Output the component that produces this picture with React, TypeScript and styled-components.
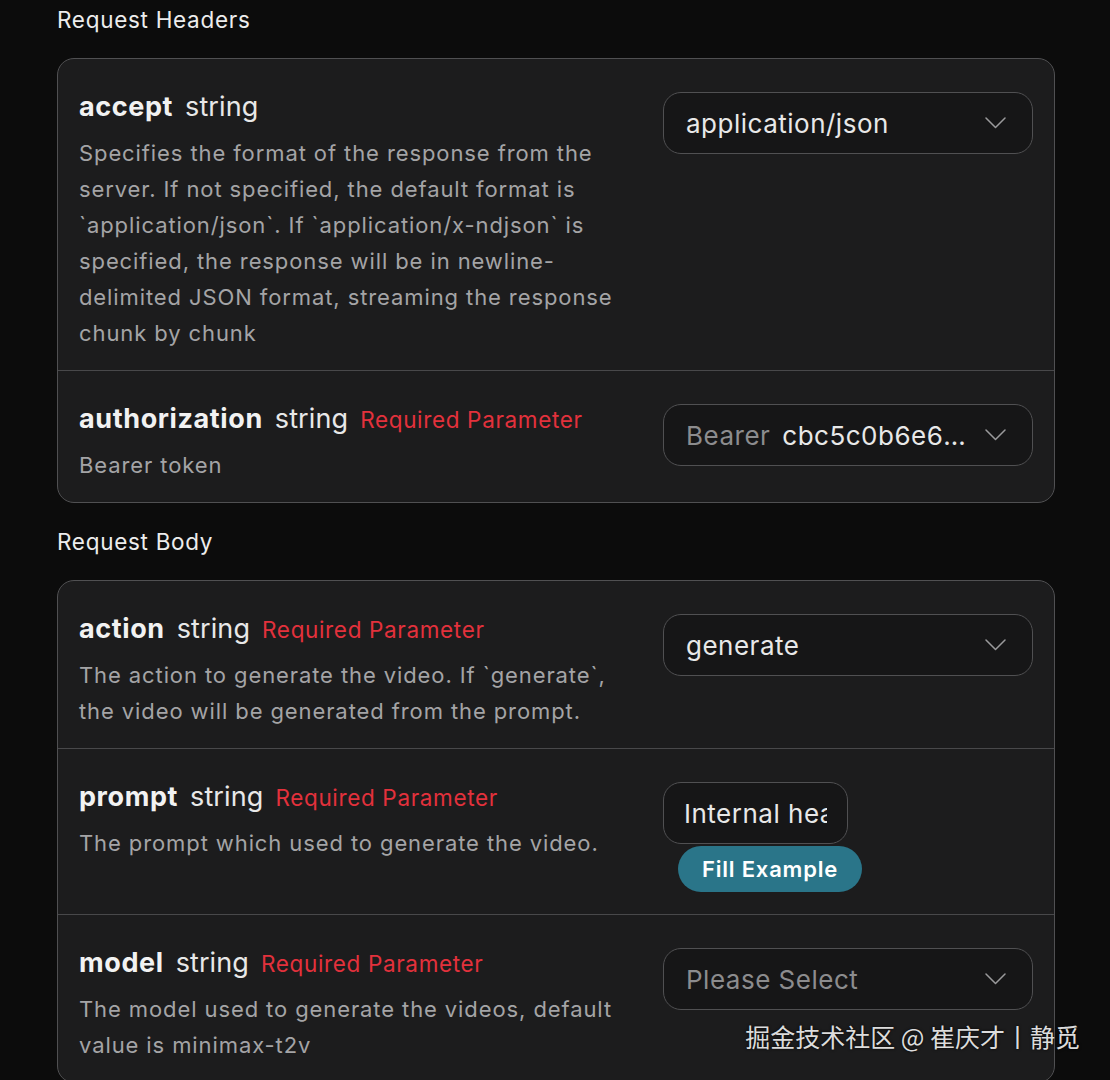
import React from "react";
import styled, { createGlobalStyle } from "styled-components";

const GlobalStyle = createGlobalStyle`
  html, body { margin: 0; padding: 0; background: #0c0c0c; }
  body { font-family: Inter, "Noto Sans", "Noto Sans CJK SC", sans-serif; -webkit-font-smoothing: antialiased; }
  * { box-sizing: border-box; }
`;

const Page = styled.div`
  position: relative;
  width: 1110px;
  height: 1080px;
  overflow: hidden;
  padding: 6px 55px 0 57px;
`;

const SectionTitle = styled.div<{ $first?: boolean }>`
  font-size: 22.5px;
  letter-spacing: 0.7px;
  line-height: 28px;
  color: #ededed;
  margin: ${(p) => (p.$first ? "0 0 24px" : "25px 0 24px")};
`;

const Card = styled.div`
  background: #1c1c1d;
  border: 1.5px solid #505052;
  border-radius: 17px;
  overflow: hidden;
`;

const Row = styled.div`
  display: grid;
  grid-template-columns: 1fr 370px;
  column-gap: 26px;
  padding: 30px 21px 19px 21px;
  & + & { border-top: 1.5px solid #48484a; }
`;

const Info = styled.div`
  display: flex;
  flex-direction: column;
  gap: 10px;
`;

const TitleLine = styled.div`
  display: flex;
  align-items: baseline;
  gap: 12px;
  line-height: 36px;
  height: 36px;
`;

const Name = styled.span`
  font-size: 27px;
  font-weight: 700;
  letter-spacing: 0.6px;
  color: #f2f2f2;
`;

const Type = styled.span`
  font-size: 27px;
  letter-spacing: 0.1px;
  color: #e8e8e8;
`;

const Required = styled.span`
  font-size: 22.5px;
  letter-spacing: 0.65px;
  color: #e3313c;
`;

const Desc = styled.div`
  font-size: 22px;
  letter-spacing: 0.9px;
  line-height: 36px;
  color: #a4a4a6;
`;

const Control = styled.div`
  padding-top: 3px;
  display: flex;
  flex-direction: column;
  align-items: flex-start;
`;

const SelectBox = styled.div`
  width: 370px;
  height: 62px;
  border: 1.5px solid #505052;
  border-radius: 18px;
  background: #161617;
  display: flex;
  align-items: center;
  padding: 0 26px 0 22px;
  gap: 14px;
`;

const SelectText = styled.span<{ $placeholder?: boolean }>`
  flex: 1;
  min-width: 0;
  font-size: 26px;
  letter-spacing: 0.5px;
  color: ${(p) => (p.$placeholder ? "#8c8c8e" : "#e8e8e8")};
  white-space: nowrap;
  overflow: hidden;
  text-overflow: ellipsis;
`;

const Prefix = styled.span`
  color: #8c8c8e;
  margin-right: 12px;
`;

const InputBox = styled.div`
  width: 185px;
  height: 62px;
  border: 1.5px solid #505052;
  border-radius: 18px;
  background: #161617;
  display: flex;
  align-items: center;
  padding: 0 20px 0 20px;
  overflow: hidden;
`;

const InputText = styled.span`
  min-width: 0;
  font-size: 26px;
  letter-spacing: 0.5px;
  color: #e8e8e8;
  white-space: nowrap;
  overflow: hidden;
`;

const FillButton = styled.button`
  margin: 2px 0 3px 15px;
  height: 46px;
  padding: 0 24px;
  border: none;
  border-radius: 23px;
  background: #2a7589;
  color: #ffffff;
  font-family: Inter, sans-serif;
  font-size: 22px;
  letter-spacing: 0.8px;
  font-weight: 600;
`;

const Watermark = styled.div`
  position: absolute;
  right: 30px;
  top: 1019px;
  font-size: 25px;
  line-height: 34px;
  color: #dcdcdc;
  font-family: "Noto Sans CJK SC", sans-serif;
  text-shadow: 0 0 3px rgba(0, 0, 0, 0.9);
`;

const Chevron = () => (
  <svg width="21" height="12" viewBox="0 0 21 12" fill="none">
    <path d="M1 1 L10.5 10.5 L20 1" stroke="#9a9a9c" strokeWidth="1.5" strokeLinecap="round" strokeLinejoin="round" />
  </svg>
);

type Param = {
  name: string;
  required?: boolean;
  desc: string;
  control: React.ReactNode;
};

const Select = ({ value, prefix, placeholder }: { value?: string; prefix?: string; placeholder?: string }) => (
  <SelectBox>
    <SelectText $placeholder={!value}>
      {prefix && <Prefix>{prefix}</Prefix>}
      {value || placeholder}
    </SelectText>
    <Chevron />
  </SelectBox>
);

const headers: Param[] = [
  {
    name: "accept",
    desc: "Specifies the format of the response from the server. If not specified, the default format is `application/json`. If `application/x-ndjson` is specified, the response will be in newline-delimited JSON format, streaming the response chunk by chunk",
    control: <Select value="application/json" />,
  },
  {
    name: "authorization",
    required: true,
    desc: "Bearer token",
    control: <Select prefix="Bearer" value="cbc5c0b6e6a94c1d8f3e" />,
  },
];

const body: Param[] = [
  {
    name: "action",
    required: true,
    desc: "The action to generate the video. If `generate`, the video will be generated from the prompt.",
    control: <Select value="generate" />,
  },
  {
    name: "prompt",
    required: true,
    desc: "The prompt which used to generate the video.",
    control: (
      <>
        <InputBox>
          <InputText>Internal headache</InputText>
        </InputBox>
        <FillButton>Fill Example</FillButton>
      </>
    ),
  },
  {
    name: "model",
    required: true,
    desc: "The model used to generate the videos, default value is minimax-t2v",
    control: <Select placeholder="Please Select" />,
  },
];

const ParamRow = ({ p }: { p: Param }) => (
  <Row>
    <Info>
      <TitleLine>
        <Name>{p.name}</Name>
        <Type>string</Type>
        {p.required && <Required>Required Parameter</Required>}
      </TitleLine>
      <Desc>{p.desc}</Desc>
    </Info>
    <Control>{p.control}</Control>
  </Row>
);

export default function App() {
  return (
    <>
      <GlobalStyle />
      <Page>
        <SectionTitle $first>Request Headers</SectionTitle>
        <Card>
          {headers.map((p) => (
            <ParamRow key={p.name} p={p} />
          ))}
        </Card>
        <SectionTitle>Request Body</SectionTitle>
        <Card>
          {body.map((p) => (
            <ParamRow key={p.name} p={p} />
          ))}
        </Card>
        <Watermark>掘金技术社区 @ 崔庆才丨静觅</Watermark>
      </Page>
    </>
  );
}
